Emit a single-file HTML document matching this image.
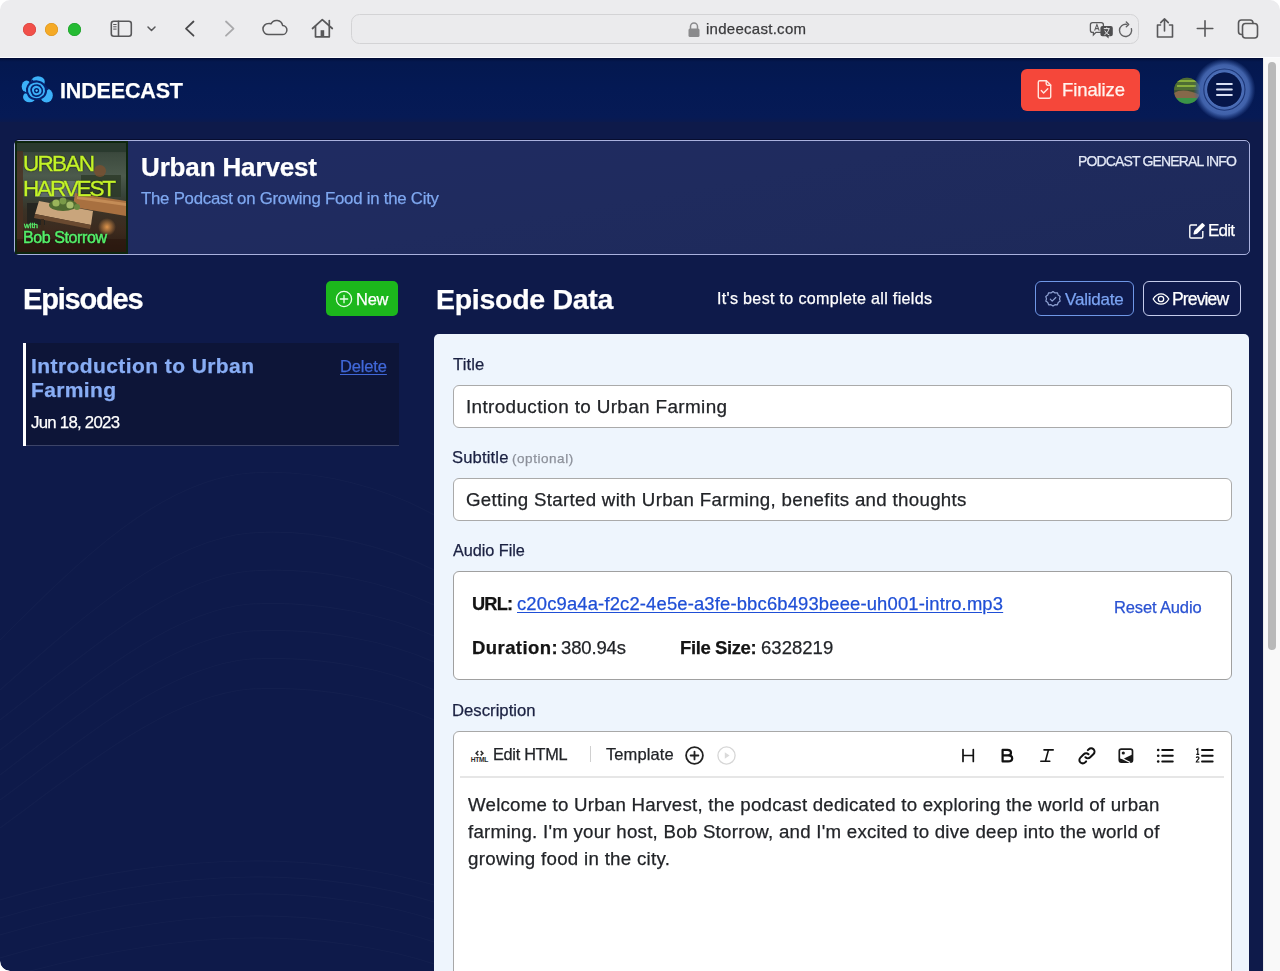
<!DOCTYPE html>
<html><head><meta charset="utf-8"><title>Indeecast</title>
<style>
html,body{margin:0;padding:0;}
body{width:1280px;height:971px;overflow:hidden;position:relative;background:#ffffff;font-family:"Liberation Sans",sans-serif;}
.a{position:absolute;}
.t{will-change:transform;-webkit-text-stroke:0.25px currentColor;position:absolute;white-space:nowrap;line-height:1;font-family:"Liberation Sans",sans-serif;}
#chrome{position:absolute;left:0;top:0;width:1280px;height:57px;background:#ececee;border-radius:10px 10px 0 0;}
#chromeline{position:absolute;left:0;top:57px;width:1280px;height:1px;background:#fbfbfd;}
#page{position:absolute;left:0;top:58px;width:1263px;height:913px;background:#0e1a4a;overflow:hidden;border-radius:0 0 0 10px;}
#hdr{position:absolute;left:0;top:0;width:1263px;height:64px;background:linear-gradient(180deg,#000830 0px,#031445 2px,#04184f 4px,#041954 30px,#061a55 59px,#0b1a4e 64px);}
#track{position:absolute;left:1263px;top:58px;width:17px;height:913px;background:#f9f9f9;border-left:1px solid #ececec;box-sizing:border-box;}
#thumb{position:absolute;left:1267.5px;top:62px;width:8.5px;height:588px;background:#b9b9b9;border-radius:4.5px;}
</style></head><body>
<div id="chrome"></div>
<div id="chromeline"></div>
<!-- traffic lights -->
<div class="a" style="left:23px;top:22.8px;width:13px;height:13px;border-radius:50%;background:#f1504a;box-shadow:inset 0 0 0 .6px #d23f3a;"></div>
<div class="a" style="left:45.25px;top:22.8px;width:13px;height:13px;border-radius:50%;background:#f5aa26;box-shadow:inset 0 0 0 .6px #d8921c;"></div>
<div class="a" style="left:67.5px;top:22.8px;width:13px;height:13px;border-radius:50%;background:#25bb33;box-shadow:inset 0 0 0 .6px #1a9a26;"></div>
<svg class="a" style="left:0;top:0" width="1280" height="58" viewBox="0 0 1280 58">
 <!-- address bar -->
 <rect x="351.5" y="14.5" width="787" height="29" rx="8" fill="#ebebed" stroke="#d3d3d5" stroke-width="1"/>
 <g fill="none" stroke="#58585a" stroke-width="1.6" stroke-linecap="round" stroke-linejoin="round">
  <!-- sidebar -->
  <rect x="111.3" y="21.3" width="20" height="15" rx="2.5"/>
  <line x1="118.5" y1="21.3" x2="118.5" y2="36.3"/>
  <line x1="113.6" y1="24.5" x2="116.2" y2="24.5" stroke-width="1"/>
  <line x1="113.6" y1="26.8" x2="116.2" y2="26.8" stroke-width="1"/>
  <line x1="113.6" y1="29.1" x2="116.2" y2="29.1" stroke-width="1"/>
  <!-- chevron down -->
  <polyline points="148,27 151.5,30.5 155,27" stroke-width="1.5"/>
  <!-- back -->
  <polyline points="193.5,21.5 186,28.6 193.5,35.7" stroke-width="1.8" stroke="#4a4a4c"/>
  <!-- forward -->
  <polyline points="226,21.5 233.5,28.6 226,35.7" stroke-width="1.8" stroke="#a9a9ab"/>
  <!-- cloud -->
  <path d="M268.5,34.6 h13.5 a4.6,4.6 0 0 0 0.6,-9.2 a6.2,6.2 0 0 0 -11.6,-1.6 a4.2,4.2 0 0 0 -2.5,-0.3 a5.5,5.5 0 0 0 0,11.1 z" stroke-width="1.5"/>
  <!-- home -->
  <path d="M312.5,28.5 L322.3,19.7 L332.3,28.5" stroke-width="1.7"/>
  <path d="M315.5,26.3 V36.8 H329.3 V26.3" stroke-width="1.7"/>
  <line x1="329.3" y1="20.5" x2="329.3" y2="24.8" stroke-width="1.7"/>
  <rect x="320.6" y="30.2" width="3.6" height="6.4" fill="#58585a" stroke="none"/>
  <!-- share -->
  <path d="M1160.5,25 h-3 v12 h15 v-12 h-3" stroke-width="1.6"/>
  <path d="M1164.5,31 V19.2 M1160.7,22.6 L1164.5,18.9 L1168.3,22.6" stroke-width="1.6"/>
  <!-- plus -->
  <path d="M1205,20.7 V36.2 M1197.3,28.5 H1212.8" stroke-width="1.6"/>
  <!-- tabs -->
  <rect x="1242.5" y="23.5" width="15" height="14.5" rx="3" stroke-width="1.6"/>
  <path d="M1242.5,34.5 h-1 a3,3 0 0 1 -3,-3 v-8.5 a3,3 0 0 1 3,-3 h8.5 a3,3 0 0 1 3,3 v0.5" stroke-width="1.6"/>
  <!-- reload -->
  <path d="M1126.6,24.4 A6.1,6.1 0 1 0 1131.4,28.6" stroke-width="1.4" stroke="#616163"/>
  <polyline points="1126.3,22 1128.7,24.4 1126.3,26.8" stroke-width="1.4" stroke="#616163"/>
 </g>
 <!-- lock -->
 <path d="M690.5,29 v-2.5 a3.5,3.5 0 0 1 7,0 v2.5" fill="none" stroke="#8a8a8c" stroke-width="1.5"/>
 <rect x="688.5" y="28.5" width="11" height="8.5" rx="1.5" fill="#8a8a8c"/>
 <!-- translate -->
 <path d="M1092.6,22.6 h8.6 a2.2,2.2 0 0 1 2.2,2.2 v5.4 a2.2,2.2 0 0 1 -2.2,2.2 h-5.2 l-2.6,2.6 v-2.6 h-0.8 a2.2,2.2 0 0 1 -2.2,-2.2 v-5.4 a2.2,2.2 0 0 1 2.2,-2.2z" fill="#ececee" stroke="#5a5a5c" stroke-width="1.3"/>
 <path d="M1094.6,30.6 l2.3,-6 l2.3,6 M1095.4,28.6 h3" fill="none" stroke="#5a5a5c" stroke-width="1.1"/>
 <path d="M1102.4,26 h8.4 a2,2 0 0 1 2,2 v6.2 a2,2 0 0 1 -2,2 h-2.2 v2.4 l-2.6,-2.4 h-3.6 a2,2 0 0 1 -2,-2 v-6.2 a2,2 0 0 1 2,-2z" fill="#4e4e50"/>
 <path d="M1103.8,28.6 h5.8 M1106.7,27.4 v1.2 M1104.4,34.8 c2,-1 3.8,-3 4.6,-6 M1104.8,30.6 c1,2 2.6,3.6 4.6,4.3" stroke="#ececee" stroke-width="1" fill="none"/>
</svg>
<div class="t" id="url" style="left:706.00px;top:21.40px;font-size:15px;color:#3a3a3c;letter-spacing:0.273px;">indeecast.com</div>
<div id="page"><div id="hdr"></div></div>
<!-- background waves -->
<svg class="a" style="left:0;top:440px" width="434" height="531" viewBox="0 440 434 531">
 <g fill="none" stroke="#ffffff" stroke-opacity="0.022" stroke-width="1.2">
  <path d="M0,640 C80,560 160,480 250,473 C320,468 390,490 434,515"/>
  <path d="M0,690 C90,610 170,540 250,533 C320,528 390,548 434,570"/>
  <path d="M0,720 C90,650 170,578 250,571 C320,566 390,584 434,605"/>
  <path d="M0,750 C90,680 170,611 250,604 C320,600 390,616 434,636"/>
  <path d="M0,775 C90,706 170,638 250,631 C320,627 390,642 434,662"/>
  <path d="M0,800 C90,733 170,666 250,659 C320,655 390,670 434,690"/>
  <path d="M0,828 C90,762 170,696 250,689 C320,685 390,700 434,720"/>
  <path d="M0,900 C100,870 180,862 250,861 C320,860 390,872 434,885"/>
  <path d="M0,918 C100,888 180,878 250,877 C320,876 390,888 434,902"/>
  <path d="M0,935 C100,905 180,895 250,894 C320,893 390,905 434,920"/>
  <path d="M0,958 C100,928 180,917 250,916 C320,915 390,927 434,942"/>
  <path d="M30,971 C110,950 180,939 250,938 C320,937 390,949 434,964"/>
 </g>
</svg>
<!-- logo -->
<svg class="a" style="left:18px;top:72px" width="40" height="36" viewBox="18 72 40 36">
 <g fill="#3cb1f8">
  <ellipse cx="38" cy="81.8" rx="6.8" ry="5.6"/>
  <ellipse cx="26.5" cy="86.5" rx="4.8" ry="6"/>
  <ellipse cx="29.5" cy="97" rx="6.5" ry="5.2"/>
  <ellipse cx="46.5" cy="95.5" rx="6.3" ry="7"/>
  <circle cx="36.5" cy="90.5" r="9.5"/>
 </g>
 <g fill="none" stroke="#06226e">
  <path d="M30,83.5 C34,80.5 41,80.5 44,85 C47.5,88.5 46.5,95 42,97.5 C38,100.5 30.5,99.5 28.5,95 C26,91 26.5,86 30,83.5 Z" stroke-width="2.1"/>
  <path d="M32.8,86.2 C35.5,84.2 40,84.7 41.3,87.8 C43.2,90 42.6,94 39.6,95.2 C37,97 32.8,96.2 32,93 C30.8,90.8 31.2,87.8 32.8,86.2 Z" stroke-width="1.7"/>
  <circle cx="36.6" cy="90.6" r="1.9" stroke-width="1.5"/>
  <path d="M33,80 C31,81 29.5,82.5 29,84 M44.5,86 C46.5,87 47.5,88.5 48,90 M28,93 C26,93.5 24.5,92.5 23.5,91.5" stroke-width="1.3"/>
 </g>
 <circle cx="36.6" cy="90.6" r="0.9" fill="#5ccaff"/>
</svg>
<!-- finalize button -->
<div class="a" style="left:1021px;top:69px;width:119px;height:42px;border-radius:6px;background:#f5473a;"></div>
<svg class="a" style="left:1035px;top:78px" width="19" height="23" viewBox="1035 78 19 23">
 <g fill="none" stroke="#ffe6de" stroke-width="1.4" stroke-linejoin="round" stroke-linecap="round">
  <path d="M1039.8,80.8 h6.6 l4.3,4.3 v11.6 a1.5,1.5 0 0 1 -1.5,1.5 h-9.4 a1.5,1.5 0 0 1 -1.5,-1.5 v-14.4 a1.5,1.5 0 0 1 1.5,-1.5z"/>
  <path d="M1046.2,80.9 v2.9 a1.4,1.4 0 0 0 1.4,1.4 h3"/>
  <path d="M1041.3,90.6 l2.3,2.3 l4.2,-4.2"/>
 </g>
</svg>
<!-- avatar -->
<svg class="a" style="left:1172px;top:76px" width="30" height="30" viewBox="1172 76 30 30">
 <defs><clipPath id="avc"><circle cx="1187" cy="90.7" r="13"/></clipPath></defs>
 <g clip-path="url(#avc)">
  <rect x="1172" y="76" width="30" height="30" fill="#3e5232"/>
  <rect x="1172" y="76" width="30" height="14" fill="#4f6e34"/>
  <path d="M1177,81 h19 M1177,86 h19" stroke="#9cc640" stroke-width="2" opacity=".75"/>
  <path d="M1174,93 C1180,89 1190,90 1200,95 V98 H1174Z" fill="#86684a"/>
  <rect x="1172" y="98" width="30" height="8" fill="#3a9448"/>
 </g>
</svg>
<!-- hamburger -->
<svg class="a" style="left:1190px;top:55px" width="70" height="70" viewBox="1190 55 70 70">
 <defs><radialGradient id="glow" cx="1224.4" cy="89.6" r="31" gradientUnits="userSpaceOnUse">
  <stop offset="0" stop-color="#3c5fae" stop-opacity="0"/>
  <stop offset="0.52" stop-color="#3c5fae" stop-opacity="0"/>
  <stop offset="0.56" stop-color="#4f72bc" stop-opacity="0.95"/>
  <stop offset="0.80" stop-color="#4a6db8" stop-opacity="0.85"/>
  <stop offset="0.90" stop-color="#3f62ad" stop-opacity="0.45"/>
  <stop offset="1" stop-color="#3a5ca8" stop-opacity="0"/>
 </radialGradient></defs>
 <circle cx="1224.4" cy="89.6" r="31" fill="url(#glow)"/>
 <circle cx="1224.4" cy="89.6" r="20.6" fill="none" stroke="#173070" stroke-width="1.1" opacity="0.9"/>
 <circle cx="1224.4" cy="89.6" r="17.2" fill="#061649"/>
 <g stroke="#d9dff3" stroke-width="2" stroke-linecap="round">
  <line x1="1217" y1="84" x2="1231.8" y2="84"/>
  <line x1="1217" y1="89.5" x2="1231.8" y2="89.5"/>
  <line x1="1217" y1="95" x2="1231.8" y2="95"/>
 </g>
</svg>
<!-- podcast card -->
<div class="a" style="left:14px;top:139.5px;width:1236px;height:115px;box-sizing:border-box;border:1.6px solid #a9b1de;border-radius:5px;background:linear-gradient(170deg,#1f2b63 0%,#1f2b5e 50%,#1d2959 100%);box-shadow:0 -1px 0 rgba(0,0,20,.5);"></div>
<!-- cover -->
<svg class="a" style="left:15px;top:141px" width="113" height="113" viewBox="0 0 113 113">
 <defs>
  <linearGradient id="cbg" x1="0" y1="0" x2="0" y2="1">
   <stop offset="0" stop-color="#26302a"/><stop offset=".1" stop-color="#3c4a3e"/><stop offset=".3" stop-color="#4c5a4c"/>
   <stop offset=".48" stop-color="#38443a"/><stop offset=".62" stop-color="#3a3226"/><stop offset=".8" stop-color="#3c2a1e"/><stop offset="1" stop-color="#2c1c12"/>
  </linearGradient>
  <radialGradient id="glowo" cx=".5" cy=".5" r=".5"><stop offset="0" stop-color="#f0a050" stop-opacity=".9"/><stop offset="1" stop-color="#f0a050" stop-opacity="0"/></radialGradient>
 </defs>
 <rect x="0" y="0" width="113" height="113" fill="#0d260e"/>
 <rect x="2" y="2" width="109" height="109" fill="url(#cbg)"/>
 <rect x="2" y="2" width="109" height="9" fill="#2a3a2e"/>
 <rect x="2" y="10" width="6" height="90" fill="#4a3020" opacity=".8"/>
 <rect x="20" y="40" width="45" height="16" fill="#8a9aa0" opacity=".45"/>
 <rect x="66" y="34" width="40" height="22" fill="#2c3a28" opacity=".8"/>
 <circle cx="85" cy="30" r="6" fill="#7a5030" opacity=".8"/>
 <path d="M60,52 L111,60 L111,75 L58,66 Z" fill="#a87040"/>
 <path d="M62,55 L111,62 L111,65 L62,58 Z" fill="#d09860" opacity=".7"/>
 <rect x="12" y="62" width="18" height="22" fill="#22221e" opacity=".85"/>
 <path d="M24,60 L78,70 L76,84 L20,73 Z" fill="#c9a57c"/>
 <path d="M20,73 L76,84 L75,88 L19,77 Z" fill="#6a4a30"/>
 <rect x="26" y="78" width="3" height="16" fill="#3a2a1c"/>
 <rect x="68" y="88" width="3" height="14" fill="#3a2a1c"/>
 <ellipse cx="48" cy="64" rx="14" ry="6" fill="#4f6a30"/>
 <circle cx="41" cy="62" r="3.6" fill="#9ab45a"/>
 <circle cx="48" cy="60" r="3.4" fill="#7a9a48"/>
 <circle cx="55" cy="64" r="3.6" fill="#a6bc6a"/>
 <circle cx="62" cy="66" r="3" fill="#6a8a40"/>
 <circle cx="92" cy="86" r="9" fill="url(#glowo)"/>
 <path d="M2,98 h109 v13 h-109z" fill="#2a160e" opacity=".6"/>
</svg>
<!-- edit icon -->
<svg class="a" style="left:1188px;top:222px" width="18" height="17" viewBox="0 0 18 17">
 <g fill="none" stroke="#ffffff" stroke-width="1.4" stroke-linejoin="round">
  <path d="M9,3 H3 a1.2,1.2 0 0 0 -1.2,1.2 v10.6 a1.2,1.2 0 0 0 1.2,1.2 h10.6 a1.2,1.2 0 0 0 1.2,-1.2 V9"/>
  <path d="M14.3,1.7 l1.9,1.9 l-7.4,7.4 l-2.6,0.7 l0.7,-2.6z" fill="#ffffff"/>
 </g>
</svg>

<!-- New button -->
<div class="a" style="left:326px;top:281px;width:72px;height:35px;border-radius:5px;background:#1cb71c;"></div>
<svg class="a" style="left:335px;top:290px" width="18" height="18" viewBox="0 0 18 18">
 <g fill="none" stroke="#e8ffe8" stroke-width="1.3" stroke-linecap="round">
  <circle cx="9" cy="9" r="7.6"/>
  <path d="M9,5.3 V12.7 M5.3,9 H12.7"/>
 </g>
</svg>
<!-- Validate button -->
<div class="a" style="left:1035px;top:281px;width:99px;height:35px;box-sizing:border-box;border:1.5px solid #6f97e6;border-radius:6px;background:#0f1a4c;"></div>
<svg class="a" style="left:1044px;top:290px" width="18" height="18" viewBox="0 0 18 18">
 <g fill="none" stroke="#8fa2d4" stroke-width="1.2" stroke-linejoin="round" stroke-linecap="round">
  <path d="M9,1.5 l2,1.4 l2.4,-0.1 l0.8,2.3 l2,1.4 l-0.7,2.3 l0.7,2.3 l-2,1.4 l-0.8,2.3 l-2.4,-0.1 l-2,1.4 l-2,-1.4 l-2.4,0.1 l-0.8,-2.3 l-2,-1.4 l0.7,-2.3 l-0.7,-2.3 l2,-1.4 l0.8,-2.3 l2.4,0.1z"/>
  <path d="M6.3,9.2 l1.9,1.9 l3.6,-3.6"/>
 </g>
</svg>
<!-- Preview button -->
<div class="a" style="left:1143px;top:281px;width:98px;height:35px;box-sizing:border-box;border:1.5px solid #c4cbeb;border-radius:6px;background:#0f1a4c;"></div>
<svg class="a" style="left:1152px;top:291px" width="18" height="16" viewBox="0 0 18 16">
 <g fill="none" stroke="#ffffff" stroke-width="1.3">
  <path d="M1.2,8 C3.5,4 6,2.8 9,2.8 C12,2.8 14.5,4 16.8,8 C14.5,12 12,13.2 9,13.2 C6,13.2 3.5,12 1.2,8 Z"/>
  <circle cx="9" cy="8" r="2.7"/>
 </g>
</svg>

<!-- episode item -->
<div class="a" style="left:23px;top:343px;width:376px;height:103px;background:#0d1538;border-bottom:1px solid #3c4468;box-sizing:border-box;"></div>
<div class="a" style="left:23px;top:343px;width:3px;height:103px;background:#ffffff;"></div>

<!-- panel -->
<div class="a" style="left:434px;top:334px;width:815px;height:700px;background:#eef5fd;border-radius:5px;"></div>
<!-- input 1 -->
<div class="a" style="left:452.5px;top:384.5px;width:779px;height:43px;box-sizing:border-box;background:#fff;border:1.5px solid #aaaaaa;border-radius:6px;"></div>
<!-- input 2 -->
<div class="a" style="left:452.5px;top:477.5px;width:779px;height:43px;box-sizing:border-box;background:#fff;border:1.5px solid #aaaaaa;border-radius:6px;"></div>
<!-- audio box -->
<div class="a" style="left:452.5px;top:571px;width:779px;height:109px;box-sizing:border-box;background:#fff;border:1.5px solid #a0a0a0;border-radius:6px;"></div>
<!-- editor -->
<div class="a" style="left:452.5px;top:730.5px;width:779px;height:400px;box-sizing:border-box;background:#fff;border:1.5px solid #a8a8a8;border-radius:6px;"></div>
<div class="a" style="left:460px;top:776px;width:764px;height:1.5px;background:#e6e6e6;"></div>
<!-- html icon -->
<svg class="a" style="left:469px;top:746px" width="20" height="17" viewBox="469 746 20 17">
 <path d="M478.3,751 l-2.2,2.2 l2.2,2.2 M480.7,751 l2.2,2.2 l-2.2,2.2" fill="none" stroke="#2a2a2a" stroke-width="1.5"/>
 <text x="470.8" y="761.6" font-family="Liberation Sans" font-weight="bold" font-size="6.7" fill="#2a2a2a" letter-spacing="-0.35">HTML</text>
</svg>
<div class="a" style="left:589.5px;top:746px;width:1px;height:16px;background:#d0d0d0;"></div>
<svg class="a" style="left:684px;top:745px" width="21" height="21" viewBox="0 0 21 21">
 <g fill="none" stroke="#222" stroke-width="1.8" stroke-linecap="round">
  <circle cx="10.5" cy="10.5" r="8.4"/>
  <path d="M10.5,6.6 V14.4 M6.6,10.5 H14.4"/>
 </g>
</svg>
<svg class="a" style="left:716px;top:745px" width="21" height="21" viewBox="0 0 21 21">
 <circle cx="10.5" cy="10.5" r="8.6" fill="none" stroke="#d6d6d6" stroke-width="1.3"/>
 <path d="M8.8,7.3 L13.6,10.5 L8.8,13.7 Z" fill="#dadada"/>
</svg>
<!-- toolbar right icons -->
<svg class="a" style="left:950px;top:740px" width="280" height="30" viewBox="950 740 280 30">
 <g fill="none" stroke="#111" stroke-linecap="round" stroke-linejoin="round">
  <path d="M963,749.5 V761.5 M973.3,749.5 V761.5 M963,755.5 H973.3" stroke-width="1.7"/>
  <path d="M1002.6,749.9 H1007.4 C1009.9,749.9 1011,751.1 1011,752.7 C1011,754.3 1009.9,755.4 1007.6,755.4 H1002.6 M1002.6,755.4 H1008.1 C1010.8,755.4 1012.2,756.7 1012.2,758.5 C1012.2,760.3 1010.8,761.4 1008.1,761.4 H1002.6 Z M1002.6,749.9 V761.4" stroke-width="2.2"/>
  <path d="M1044,749.9 H1053.2 M1040.8,761.3 H1049.8 M1048.5,749.9 L1045.4,761.3" stroke-width="1.6"/>
  <g transform="translate(1079,747.8) scale(0.84)">
   <path d="M13.828 10.172a4 4 0 00-5.656 0l-4 4a4 4 0 105.656 5.656l1.102-1.101m-.758-4.899a4 4 0 005.656 0l4-4a4 4 0 00-5.656-5.656l-1.1 1.1" stroke-width="2.4" transform="translate(-2.5,-2.5)"/>
  </g>
  <path d="M1162.2,750 H1172.8 M1162.2,755.8 H1172.8 M1162.2,761.5 H1172.8" stroke-width="1.9"/>
  <path d="M1202,750 H1212.7 M1202,755.8 H1212.7 M1202,761.5 H1212.7" stroke-width="1.9"/>
 </g>
 <g fill="#111">
  <circle cx="1158.2" cy="750" r="1.3"/><circle cx="1158.2" cy="755.8" r="1.3"/><circle cx="1158.2" cy="761.5" r="1.3"/>
 </g>
 <rect x="1119.3" y="749.1" width="13.2" height="13" rx="2" fill="#fff" stroke="#1a1a1a" stroke-width="1.7"/>
 <circle cx="1123.3" cy="753" r="1.6" fill="#1a1a1a"/>
 <path d="M1125.5,757.8 L1132.4,754.6 V762.1 H1119.3 V758.6 L1123.5,759 Z" fill="#1a1a1a"/>
 <path d="M1121.2,758 L1130.2,762.5" stroke="#fff" stroke-width="1.3"/>
 <path d="M1196.2,749.6 L1197.8,748.8 V754.3 M1196.3,754.3 H1199.2" fill="none" stroke="#111" stroke-width="1.2"/>
 <path d="M1196.3,757.8 C1196.6,756.6 1199,756.5 1199,758 C1199,759.2 1196.4,760.5 1196.3,762 H1199.4" fill="none" stroke="#111" stroke-width="1.2"/>
</svg>
<!-- bottom-left window corner -->
<svg class="a" style="left:0;top:961px" width="10" height="10" viewBox="0 0 10 10"><path d="M0,0 V10 H10 A10,10 0 0 1 0,0 Z" fill="#ffffff"/></svg>

<div id="track"></div>
<div id="thumb"></div>
<div class="t" id="logo" style="left:59.80px;top:80.70px;font-size:21.5px;font-weight:bold;color:#ffffff;letter-spacing:-0.154px;">INDEECAST</div>
<div class="t" id="fin" style="left:1062.40px;top:81.10px;font-size:18.5px;color:#fff4ee;letter-spacing:-0.107px;">Finalize</div>
<div class="t" id="uh" style="left:140.80px;top:153.50px;font-size:26px;font-weight:bold;color:#ffffff;letter-spacing:-0.145px;">Urban Harvest</div>
<div class="t" id="sub" style="left:141.00px;top:190.60px;font-size:16.8px;color:#7fa8f0;letter-spacing:-0.234px;">The Podcast on Growing Food in the City</div>
<div class="t" id="pgi" style="left:1077.80px;top:154.20px;font-size:14px;color:#e3e8f6;letter-spacing:-0.855px;">PODCAST GENERAL INFO</div>
<div class="t" id="edit" style="left:1208.00px;top:222.25px;font-size:17px;color:#ffffff;letter-spacing:-0.766px;">Edit</div>
<div class="t" id="eps" style="left:23.40px;top:285.00px;font-size:29px;font-weight:bold;color:#ffffff;letter-spacing:-1.191px;">Episodes</div>
<div class="t" id="new" style="left:355.60px;top:290.70px;font-size:16.4px;color:#ffffff;letter-spacing:-0.198px;">New</div>
<div class="t" id="epd" style="left:435.80px;top:284.60px;font-size:28.5px;font-weight:bold;color:#ffffff;letter-spacing:-0.286px;">Episode Data</div>
<div class="t" id="best" style="left:717.00px;top:290.40px;font-size:16.1px;color:#ffffff;letter-spacing:0.315px;">It's best to complete all fields</div>
<div class="t" id="val" style="left:1065.00px;top:290.90px;font-size:17px;color:#7ba3f2;letter-spacing:-0.198px;">Validate</div>
<div class="t" id="prev" style="left:1172.40px;top:290.90px;font-size:17.6px;color:#ffffff;letter-spacing:-0.896px;">Preview</div>
<div class="t" id="ept1" style="left:31.00px;top:354.90px;font-size:21px;font-weight:bold;color:#88adf4;letter-spacing:0.418px;">Introduction to Urban</div>
<div class="t" id="ept2" style="left:31.00px;top:378.50px;font-size:21px;font-weight:bold;color:#88adf4;letter-spacing:0.359px;">Farming</div>
<div class="t" id="date" style="left:31.40px;top:415.40px;font-size:16.8px;color:#ffffff;letter-spacing:-0.732px;">Jun 18, 2023</div>
<div class="t" id="del" style="left:340.00px;top:358.00px;font-size:16.5px;color:#4168d8;letter-spacing:-0.141px;text-decoration:underline;text-underline-offset:2px;">Delete</div>
<div class="t" id="lt" style="left:453.20px;top:356.70px;font-size:16.6px;color:#1b2142;letter-spacing:0.116px;">Title</div>
<div class="t" id="in1" style="left:466.20px;top:398.00px;font-size:18.9px;color:#222428;letter-spacing:0.359px;">Introduction to Urban Farming</div>
<div class="t" id="ls" style="left:452.20px;top:449.80px;font-size:16.6px;color:#1b2142;letter-spacing:0.149px;">Subtitle</div>
<div class="t" id="opt" style="left:512.00px;top:451.80px;font-size:13.5px;color:#8c909a;letter-spacing:0.547px;">(optional)</div>
<div class="t" id="in2" style="left:466.00px;top:490.60px;font-size:18.7px;color:#222428;letter-spacing:0.310px;">Getting Started with Urban Farming, benefits and thoughts</div>
<div class="t" id="la" style="left:453.20px;top:542.00px;font-size:16.3px;color:#1b2142;letter-spacing:-0.067px;">Audio File</div>
<div class="t" id="urlb" style="left:472.00px;top:595.00px;font-size:18.2px;font-weight:bold;color:#141414;letter-spacing:-0.812px;">URL:</div>
<div class="t" id="link" style="left:517.00px;top:595.00px;font-size:18.4px;color:#1f4fd6;letter-spacing:0.167px;text-decoration:underline;text-underline-offset:2px;">c20c9a4a-f2c2-4e5e-a3fe-bbc6b493beee-uh001-intro.mp3</div>
<div class="t" id="reset" style="left:1114.20px;top:599.40px;font-size:16.5px;color:#2a52d2;letter-spacing:-0.138px;">Reset Audio</div>
<div class="t" id="dur" style="left:472.00px;top:639.00px;font-size:18.5px;font-weight:bold;color:#141414;letter-spacing:0.423px;">Duration:</div>
<div class="t" id="durv" style="left:560.60px;top:639.00px;font-size:18.5px;color:#222428;letter-spacing:-0.141px;">380.94s</div>
<div class="t" id="fs" style="left:680.00px;top:638.60px;font-size:18.5px;font-weight:bold;color:#141414;letter-spacing:-0.400px;">File Size:</div>
<div class="t" id="fsv" style="left:760.60px;top:638.60px;font-size:18.5px;color:#222428;letter-spacing:0.028px;">6328219</div>
<div class="t" id="ld" style="left:452.40px;top:702.80px;font-size:16.7px;color:#1b2142;letter-spacing:0.012px;">Description</div>
<div class="t" id="eh" style="left:492.60px;top:745.90px;font-size:16.3px;color:#222428;letter-spacing:-0.288px;">Edit HTML</div>
<div class="t" id="tpl" style="left:606.40px;top:746.20px;font-size:16.5px;color:#222428;letter-spacing:0.092px;">Template</div>
<div class="t" id="b1" style="left:468.00px;top:796.30px;font-size:18.7px;color:#222428;letter-spacing:0.225px;">Welcome to Urban Harvest, the podcast dedicated to exploring the world of urban</div>
<div class="t" id="b2" style="left:468.00px;top:823.10px;font-size:18.7px;color:#222428;letter-spacing:0.250px;">farming. I'm your host, Bob Storrow, and I'm excited to dive deep into the world of</div>
<div class="t" id="b3" style="left:468.00px;top:849.90px;font-size:18.7px;color:#222428;letter-spacing:0.294px;">growing food in the city.</div>
<div class="t" id="cv1" style="left:22.80px;top:152.80px;font-size:22.5px;color:#c4f42a;letter-spacing:-1.691px;-webkit-text-stroke:0.4px #c4f42a;text-shadow:0 0 1.5px #000,0 0 1px #000;">URBAN</div>
<div class="t" id="cv2" style="left:22.80px;top:178.10px;font-size:22.5px;color:#c4f42a;letter-spacing:-2.146px;-webkit-text-stroke:0.4px #c4f42a;text-shadow:0 0 1.5px #000,0 0 1px #000;">HARVEST</div>
<div class="t" id="cv3" style="left:23.80px;top:222.20px;font-size:8px;color:#56f06a;letter-spacing:-0.078px;-webkit-text-stroke:0.3px #56f06a;">with</div>
<div class="t" id="cv4" style="left:22.80px;top:230.00px;font-size:16px;color:#56f06a;letter-spacing:-0.405px;-webkit-text-stroke:0.5px #56f06a;text-shadow:0 0 1.5px #000,0 0 1px #000;">Bob Storrow</div>
</body></html>
